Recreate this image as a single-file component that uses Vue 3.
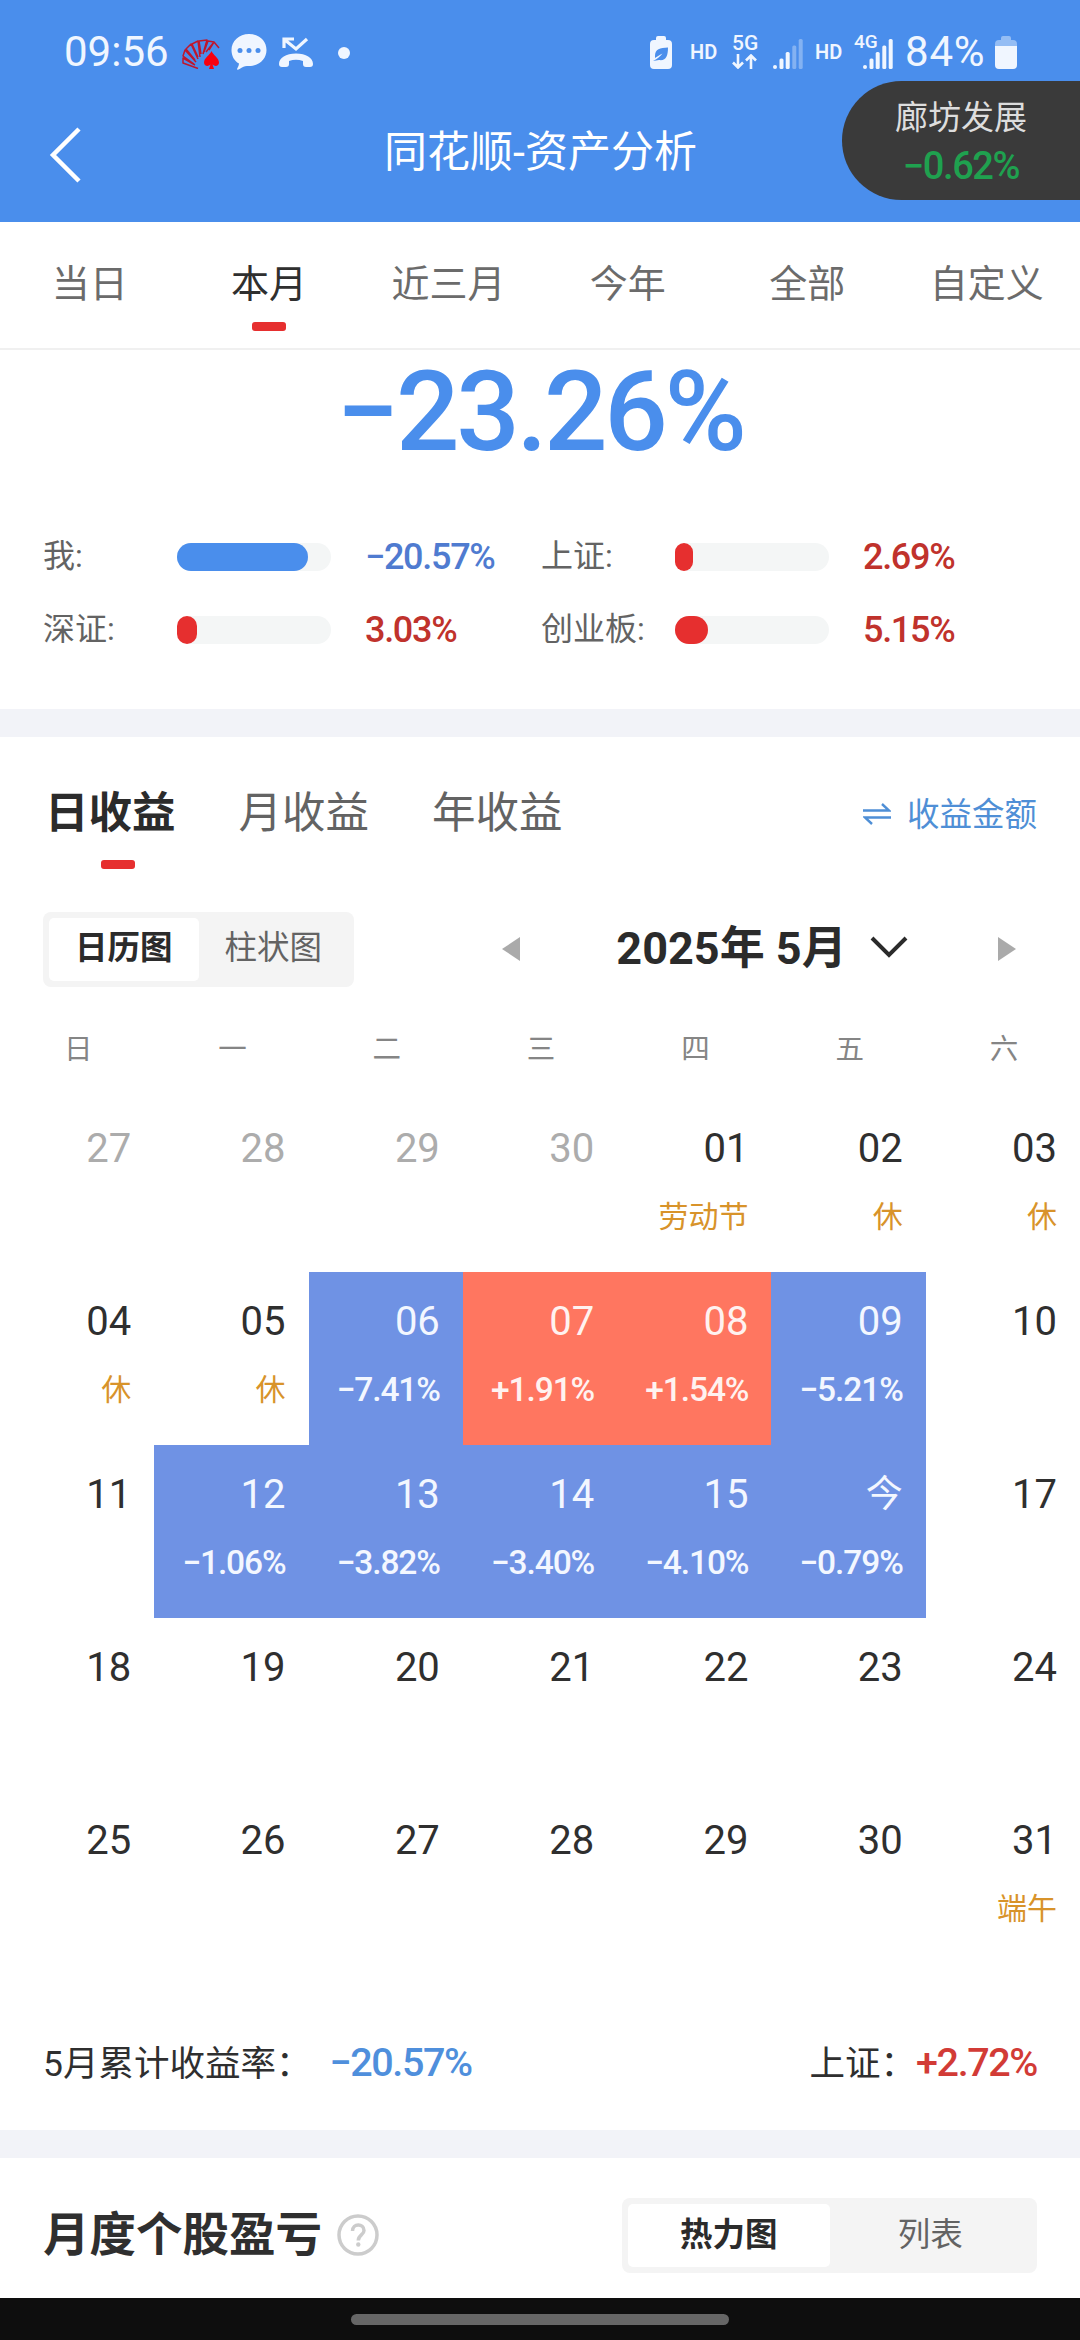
<template>
  <div class="page">
    <header class="header">
      <div class="status-bar">
        <div class="status-left">
          <span class="clock">09:56</span>
          <svg class="icon-cards" viewBox="0 0 38 30">
            <g fill="none" stroke="#c0162c" stroke-width="1.500" stroke-linejoin="round">
              <path d="M16 29.500 L1 24 V19 L13 26 M12 25 L1 17 L3 11 L14 23 M13 21 L4 10 L9 5 L16 20 M16 18 L10 5 L16 2 L18 18 M19 15 L17 2 L25 1 L21 15 M22 13 L26 2 L32 3 L24 13 M27 11 L32 3 L37 9" />
            </g>
            <path d="M29.500 12 C31 16 37 19 37 23.500 C37 27 33 28 30.500 25.500 L32 30 H27 L28.500 25.500 C26 28 22 27 22 23.500 C22 19 28 16 29.500 12Z" fill="#f8000f" />
          </svg>
          <svg class="icon-bubble" viewBox="0 0 36 36">
            <path d="M18 0 C28 0 35.500 7 35.500 16 C35.500 25 28 32 18 32 C15 32 13 32 11 33.500 C9 35 7 36 6 35.500 C6 34 8 32 8 29.500 C3 27 0.500 21.500 0.500 16 C0.500 7 8 0 18 0Z" fill="#f0f6ff" />
            <g fill="#4a8eec"><circle cx="9" cy="16.500" r="2.500" /><circle cx="18" cy="16.500" r="2.500" /><circle cx="27" cy="16.500" r="2.500" /></g>
          </svg>
          <svg class="icon-call" viewBox="0 0 34 30">
            <path d="M5 11 V2 H15 M6 3 L17 12 L28 2" fill="none" stroke="#f0f6ff" stroke-width="3.200" />
            <path d="M0 27 C0 21 7 16.500 17 16.500 C27 16.500 34 21 34 27 Q34 30 31 30 H27 Q24 30 24 27 V24 Q17 21.500 10 24 V27 Q10 30 7 30 H3 Q0 30 0 27Z" fill="#f0f6ff" />
          </svg>
          <i class="more-dot"></i>
        </div>
        <div class="status-right">
          <svg class="icon-saver" viewBox="0 0 22 33">
            <path d="M6 4 V2 Q6 0 8 0 H14 Q16 0 16 2 V4 H18 Q22 4 22 8 V29 Q22 33 18 33 H4 Q0 33 0 29 V8 Q0 4 4 4Z" fill="#f0f6ff" />
            <path d="M5 20 C5 13 10 12 18 11.500 C18 20 16 25 9 24 L3 25 C7 23 10 21 12.500 17.500 C9 19 7 21 5 22Z" fill="#4a8eec" />
          </svg>
          <span class="hd">HD</span>
          <div class="net">
            <span class="net-label">5G</span>
            <svg class="icon-arrows" viewBox="0 0 25 15">
              <path d="M6 0 V13 M1 8.500 L6 13.500 L11 8.500 M19 15 V2 M14 6.500 L19 1.500 L24 6.500" fill="none" stroke="#f0f6ff" stroke-width="2.600" />
            </svg>
          </div>
          <svg class="icon-signal first" viewBox="0 0 30 30">
            <g fill="#f0f6ff">
              <circle cx="2" cy="28" r="2" /><rect x="6.500" y="19.500" width="4" height="10.500" rx="1.500" /><rect x="12.700" y="13" width="4" height="17" rx="1.500" />
              <g opacity=".35"><rect x="19.300" y="6.500" width="4" height="23.500" rx="1.500" /><rect x="25.700" y="0" width="4" height="30" rx="1.500" /></g>
            </g>
          </svg>
          <span class="hd">HD</span>
          <div class="net4">
            <span class="net4-label">4G</span>
            <svg class="icon-signal" viewBox="0 0 30 30">
              <g fill="#f0f6ff">
                <circle cx="2" cy="28" r="2" /><rect x="6.500" y="19.500" width="4" height="10.500" rx="1.500" /><rect x="12.700" y="13" width="4" height="17" rx="1.500" />
                <rect x="19.300" y="6.500" width="4" height="23.500" rx="1.500" /><rect x="25.700" y="0" width="4" height="30" rx="1.500" />
              </g>
            </svg>
          </div>
          <span class="battery-text">84%</span>
          <svg class="icon-battery" viewBox="0 0 22 33">
            <path d="M6 4 V2 Q6 0 8 0 H14 Q16 0 16 2 V4 H18 Q22 4 22 8 V10 H0 V8 Q0 4 4 4Z" fill="#f0f6ff" opacity=".45" />
            <path d="M0 10 H22 V29 Q22 33 18 33 H4 Q0 33 0 29Z" fill="#f0f6ff" />
          </svg>
        </div>
      </div>
      <div class="nav-bar">
        <svg class="back" viewBox="0 0 32 56"><path d="M30 2 L4 28 L30 54" fill="none" stroke="#fff" stroke-width="4.500" /></svg>
        <h1 class="title">同花顺-资产分析</h1>
      </div>
      <div class="float-stock">
        <span class="float-name">廊坊发展</span>
        <span class="float-rate num">−0.62%</span>
      </div>
    </header>

    <nav class="range-tabs">
      <div v-for="tab in rangeTabs" :key="tab" class="range-tab" :class="{ active: tab === activeRange }" @click="activeRange = tab">{{ tab }}</div>
    </nav>

    <section class="summary">
      <div class="total num">−23.26%</div>
      <div class="compare">
        <div v-for="item in compare" :key="item.name" class="compare-item">
          <span class="compare-name">{{ item.name }}</span>
          <div class="track"><div class="fill" :class="item.type" :style="{ width: item.width + 'px' }"></div></div>
          <span class="compare-rate num" :class="item.type">{{ item.rate }}</span>
        </div>
      </div>
    </section>

    <section class="profit">
      <div class="profit-head">
        <div class="profit-tabs">
          <span v-for="tab in profitTabs" :key="tab" class="profit-tab" :class="{ active: tab === activeProfit }" @click="activeProfit = tab">{{ tab }}</span>
        </div>
        <div class="switch-amount">
          <svg class="icon-swap" viewBox="0 0 28 22"><path d="M0 7.500 H26 L19 1 M28 14.500 H2 L9 21" fill="none" stroke="#4f8fd6" stroke-width="2.400" /></svg>
          <span>收益金额</span>
        </div>
      </div>

      <div class="toolbar">
        <div class="segment chart-segment">
          <span class="seg-item on">日历图</span>
          <span class="seg-item">柱状图</span>
        </div>
        <div class="month-picker">
          <svg class="arrow" viewBox="0 0 18 24"><path d="M18 0 V24 L0 12Z" fill="#aaa" /></svg>
          <div class="month">
            <span>2025年 5月</span>
            <svg class="icon-down" viewBox="0 0 38 24"><path d="M2 2 L19 19 L36 2" fill="none" stroke="#2b2b2b" stroke-width="4" /></svg>
          </div>
          <svg class="arrow" viewBox="0 0 18 24"><path d="M0 0 V24 L18 12Z" fill="#aaa" /></svg>
        </div>
      </div>

      <div class="week">
        <span v-for="d in weekdays" :key="d">{{ d }}</span>
      </div>
      <div class="calendar">
        <div v-for="(day, i) in days" :key="i" class="day" :class="day.type">
          <span class="date" :class="{ today: day.date === '今' }">{{ day.date }}</span>
          <span v-if="day.note" class="note" :class="{ num: day.type }">{{ day.note }}</span>
        </div>
      </div>

      <div class="month-total">
        <div class="total-left">5月累计收益率：<span class="num sum-down">−20.57%</span></div>
        <div class="total-right">上证：<span class="num sum-up">+2.72%</span></div>
      </div>
    </section>

    <section class="stocks">
      <h2 class="stocks-title">月度个股盈亏</h2>
      <svg class="icon-help" viewBox="0 0 42 42">
        <circle cx="21" cy="21" r="19" fill="none" stroke="#ccc" stroke-width="3.500" />
        <path d="M15.500 17 C15.500 9 27 9 27 16.500 C27 21 21.300 21 21.300 26.500" fill="none" stroke="#ccc" stroke-width="3.500" />
        <circle cx="21.300" cy="30.500" r="2.200" fill="#ccc" />
      </svg>
      <div class="segment stock-segment">
        <span class="seg-item on">热力图</span>
        <span class="seg-item">列表</span>
      </div>
    </section>

    <footer class="home-bar"><i></i></footer>
  </div>
</template>

<script setup>
import { ref } from 'vue'

const rangeTabs = ['当日', '本月', '近三月', '今年', '全部', '自定义']
const activeRange = ref('本月')

const compare = [
  { name: '我:', rate: '−20.57%', width: 131, type: 'down' },
  { name: '上证:', rate: '2.69%', width: 18, type: 'up' },
  { name: '深证:', rate: '3.03%', width: 20, type: 'up' },
  { name: '创业板:', rate: '5.15%', width: 33, type: 'up' }
]

const profitTabs = ['日收益', '月收益', '年收益']
const activeProfit = ref('日收益')

const weekdays = ['日', '一', '二', '三', '四', '五', '六']

// notes of trading days and holidays, by date
const notes = {
  '01': '劳动节', '02': '休', '03': '休', '04': '休', '05': '休',
  '06': '−7.41%', '07': '+1.91%', '08': '+1.54%', '09': '−5.21%',
  12: '−1.06%', 13: '−3.82%', 14: '−3.40%', 15: '−4.10%', 16: '−0.79%',
  31: '端午'
}

const days = ['27', '28', '29', '30'].map((date) => ({ date, type: 'other' }))
for (let i = 1; i <= 31; i++) {
  const date = String(i).padStart(2, '0')
  const note = notes[date]
  let type = ''
  if (note && note[0] === '−') type = 'loss'
  if (note && note[0] === '+') type = 'gain'
  days.push({ date: i === 16 ? '今' : date, note, type })
}
</script>

<style>
body {
  background: #fff;
}
</style>

<style scoped>
.page {
  width: 1080px;
  height: 2340px;
  overflow: hidden;
  display: flex;
  flex-direction: column;
  background: #fff;
  color: #2f2f2f;
  font-family: Roboto, 'Noto Sans CJK SC', sans-serif;
}

svg {
  display: block;
  flex: none;
}

.num {
  font-weight: 500;
}

.header {
  position: relative;
  height: 222px;
  flex: none;
  background: #4a8eec;
}

.status-bar {
  display: flex;
  justify-content: space-between;
  height: 80px;
  padding: 0 63px 0 64px;
  color: #f0f6ff;
}

.status-left,
.status-right {
  display: flex;
  align-items: center;
  height: 104px;
}

.clock,
.battery-text {
  font-size: 42px;
  line-height: 48px;
}

.clock {
  width: 118px;
}

.icon-cards {
  width: 38px;
  height: 30px;
  margin-top: 4px;
}

.icon-bubble {
  width: 36px;
  height: 36px;
  margin-left: 11px;
}

.icon-call {
  width: 34px;
  height: 30px;
  margin-left: 12px;
}

.more-dot {
  width: 12px;
  height: 12px;
  margin: 2px 0 0 25px;
  border-radius: 50%;
  background: #f0f6ff;
}

.icon-saver,
.icon-battery {
  width: 22px;
  height: 33px;
}

.hd {
  width: 28px;
  margin-left: 18px;
  font-size: 20px;
  font-weight: 600;
}

.net {
  width: 25px;
  height: 36px;
  margin-left: 14px;
}

.net-label,
.net4-label {
  display: block;
  font-size: 21px;
  font-weight: 500;
  line-height: 18px;
}

.icon-arrows {
  width: 25px;
  height: 15px;
  margin-top: 2px;
}

.icon-signal {
  width: 30px;
  height: 30px;
}

.icon-signal.first {
  margin: 4px 0 0 16px;
}

.icon-signal.first + .hd {
  margin-left: 12px;
}

.net4 {
  position: relative;
  padding: 4px 0 0 8px;
  margin-left: 12px;
}

.net4-label {
  position: absolute;
  left: -1px;
  top: -2px;
  font-size: 19px;
}

.battery-text {
  width: 90px;
  margin-left: 12px;
  letter-spacing: 0.8px;
}

.nav-bar {
  display: flex;
  align-items: center;
  height: 142px;
}

.back {
  width: 32px;
  height: 56px;
  margin: 8px 0 0 49px;
}

.title {
  flex: 1;
  margin: 1px 80px 0 0;
  text-align: center;
  font-size: 43px;
  font-weight: 400;
  line-height: 60px;
  color: #fff;
}

.float-stock {
  position: absolute;
  right: 0;
  top: 81px;
  width: 238px;
  height: 119px;
  border-radius: 60px 0 0 60px;
  background: #3a3a3a;
  display: flex;
  flex-direction: column;
  align-items: center;
}

.float-name {
  margin-top: 13px;
  font-size: 33px;
  line-height: 48px;
  color: #ddd;
}

.float-rate {
  font-size: 38px;
  line-height: 49px;
  letter-spacing: -1.4px;
  color: #1fa14f;
}

.range-tabs {
  display: flex;
  height: 126px;
  flex: none;
  border-bottom: 2px solid #f0f0f0;
}

.range-tab {
  position: relative;
  width: 179.4px;
  text-align: center;
  font-size: 38px;
  line-height: 124px;
  color: #6b6b6b;
}

.range-tab.active {
  color: #2f2f2f;
}

.range-tab.active::after,
.profit-tab.active::after {
  content: '';
  position: absolute;
  left: 50%;
  top: 100px;
  width: 34px;
  height: 9px;
  margin-left: -17px;
  border-radius: 3px;
  background: #e62f2f;
}

.summary {
  height: 359px;
  flex: none;
}

.total {
  height: 122px;
  text-align: center;
  font-size: 112px;
  line-height: 124px;
  letter-spacing: -3.4px;
  color: #4a8eec;
}

.compare {
  display: grid;
  grid-template-columns: 498px 498px;
  grid-auto-rows: 73px;
  margin: 48px 0 0 43px;
}

.compare-item {
  display: flex;
  align-items: center;
}

.compare-name {
  width: 134px;
  font-size: 32px;
  line-height: 44px;
  margin-top: -2px;
  color: #636363;
}

.track {
  width: 154px;
  height: 28px;
  border-radius: 14px;
  background: #f4f6f6;
}

.fill {
  height: 28px;
  border-radius: 14px;
}

.fill.down {
  background: #4a8eec;
}

.fill.up {
  background: #e62f2f;
}

.compare-rate {
  margin-left: 34px;
  font-size: 36px;
  letter-spacing: -1.3px;
}

.compare-rate.down {
  color: #4f7bd0;
}

.compare-rate.up {
  color: #c0322c;
}

.profit {
  height: 1393px;
  flex: none;
  border-top: 28px solid #f2f3f8;
}

.profit-head {
  display: flex;
  justify-content: space-between;
  height: 175px;
  padding: 0 43px 0 45px;
}

.profit-tabs {
  display: flex;
  gap: 63px;
}

.profit-tab {
  position: relative;
  font-size: 43.5px;
  line-height: 153px;
  color: #636363;
}

.profit-tab.active {
  font-weight: 700;
  color: #2b2b2b;
}

.profit-tab.active::after {
  left: 73px;
  top: 123px;
}

.switch-amount {
  display: flex;
  gap: 16px;
  align-items: center;
  height: 149px;
  font-size: 32.5px;
  color: #4f8fd6;
}

.icon-swap {
  width: 28px;
  height: 22px;
  margin-top: 4px;
}

.toolbar {
  display: flex;
  justify-content: space-between;
  padding: 0 64px 0 43px;
}

.segment {
  display: flex;
  box-sizing: border-box;
  height: 75px;
  padding: 6px;
  border-radius: 8px;
  background: #f4f4f4;
}

.seg-item {
  flex: 1;
  text-align: center;
  font-size: 32.5px;
  line-height: 60px;
  color: #636363;
}

.seg-item.on {
  border-radius: 5px;
  background: #fff;
  font-weight: 700;
  color: #2b2b2b;
}

.chart-segment {
  width: 311px;
}

.month-picker {
  display: flex;
  align-items: center;
  justify-content: space-between;
  width: 514px;
  height: 74px;
}

.arrow {
  width: 18px;
  height: 24px;
}

.month {
  display: flex;
  align-items: center;
  gap: 23px;
  margin-left: 6px;
  font-size: 45px;
  font-weight: 700;
  line-height: 60px;
  color: #2b2b2b;
}

.month span {
  margin-top: -1px;
}

.icon-down {
  width: 38px;
  height: 24px;
  margin-top: -3px;
}

.week {
  display: grid;
  grid-template-columns: repeat(7, 1fr);
  height: 112px;
  font-size: 28.5px;
  line-height: 125px;
  color: #858585;
}

.week span {
  padding-left: 64px;
}

.calendar {
  display: grid;
  grid-template-columns: repeat(7, 1fr);
  grid-auto-rows: 173px;
}

.day {
  display: flex;
  flex-direction: column;
  align-items: flex-end;
  padding-right: 23px;
}

.day.other {
  color: #acacac;
}

.day.loss {
  background: #6f92e4;
  color: #f3f7ff;
}

.day.gain {
  background: #ff7660;
  color: #fff2f0;
}

.date {
  margin-top: 20px;
  font-size: 40px;
  line-height: 60px;
}

.date.today {
  font-size: 37px;
}

.note {
  margin-top: 8px;
  font-size: 30px;
  line-height: 60px;
  color: #d8932a;
}

.note.num {
  color: inherit;
  font-size: 33.5px;
  letter-spacing: -1.1px;
}

.month-total {
  display: flex;
  justify-content: space-between;
  padding: 69px 43px 0;
  font-size: 35.5px;
  line-height: 60px;
}

.month-total .num {
  font-size: 39.5px;
  letter-spacing: -1.4px;
}

.sum-down {
  margin-left: 18px;
  color: #4f8fdc;
}

.sum-up {
  color: #d23b36;
}

.stocks {
  display: flex;
  height: 168px;
  flex: none;
  box-sizing: border-box;
  padding: 40px 43px 0;
  border-top: 28px solid #f2f3f8;
}

.stocks-title {
  margin: 2px 0 0;
  font-size: 46.5px;
  font-weight: 700;
  line-height: 70px;
}

.icon-help {
  width: 42px;
  height: 42px;
  margin: 16px 0 0 15px;
}

.stock-segment {
  width: 415px;
  margin-left: auto;
}

.stock-segment .seg-item {
  line-height: 62px;
}

.home-bar {
  flex: 1;
  background: #0e0e0e;
}

.home-bar i {
  display: block;
  width: 378px;
  height: 11px;
  margin: 16px auto 0;
  border-radius: 6px;
  background: #666;
}
</style>
